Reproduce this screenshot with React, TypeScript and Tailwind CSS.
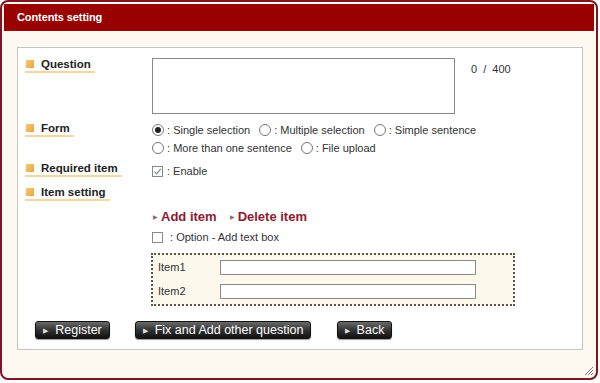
import React from "react";

const font = "font-['Liberation_Sans',Arial,sans-serif]";
const optCls = "text-[11px] leading-[14px] text-[#333]";

function Label({ text }: { text: string }) {
  return (
    <div className="flex w-fit items-center gap-[7px] border-b-2 border-[#f0d8a6] pl-[1px] pr-[4px]">
      <span className="h-[8px] w-[8px] bg-gradient-to-br from-[#f8c870] to-[#e9a540]" />
      <span className="text-[11.5px] font-bold leading-[14px] text-[#222]">{text}</span>
    </div>
  );
}

function Radio({ checked, label }: { checked?: boolean; label: string }) {
  return (
    <span className="flex items-center gap-[3px]">
      <span className="flex h-[12px] w-[12px] items-center justify-center rounded-full border border-[#777] bg-white">
        {checked && <span className="h-[6px] w-[6px] rounded-full bg-[#222]" />}
      </span>
      <span className={optCls}>: {label}</span>
    </span>
  );
}

function Check({ checked, label }: { checked?: boolean; label: string }) {
  return (
    <span className="flex items-center gap-[4px]">
      <span className="flex h-[11px] w-[11px] items-center justify-center border border-[#888] bg-white">
        {checked && (
          <svg width="9" height="9" viewBox="0 0 9 9">
            <path d="M1.5 4.5 L3.6 6.8 L7.8 1.8" fill="none" stroke="#7a8a7a" strokeWidth="1.1" />
          </svg>
        )}
      </span>
      <span className={optCls}>{label}</span>
    </span>
  );
}

function Btn({ text, w }: { text: string; w: string }) {
  return (
    <button
      className={`flex h-[18px] items-center justify-center gap-[7px] rounded-[3px] border border-[#111] bg-gradient-to-b from-[#6a6a6a] via-[#333] to-[#111] text-[12.5px] leading-none text-white shadow-[0_1px_1px_rgba(0,0,0,0.4)] ${w}`}
    >
      <span className="text-[7px] text-[#ddd]">▶</span>
      {text}
    </button>
  );
}

function LinkArrow({ text }: { text: string }) {
  return (
    <span className="flex items-center gap-[3px]">
      <span className="text-[6px] leading-[16px] text-[#8a6a6a]">▶</span>
      <span className="text-[13px] font-bold leading-[16px] text-[#8e1b2c]">{text}</span>
    </span>
  );
}

function ItemRow({ label }: { label: string }) {
  return (
    <div className="flex h-[15px] items-center">
      <span className="w-[62px] text-[11px] leading-[15px] text-[#333]">{label}</span>
      <span className="h-[15px] w-[256px] border border-[#8a8a8a] bg-white" />
    </div>
  );
}

export default function App() {
  return (
    <div className={`h-[383px] w-[600px] bg-white ${font}`}>
      <div className="relative flex h-[380px] w-[598px] flex-col rounded-[8px] border-2 border-[#7d1622] bg-[#fdf9f0] p-[2px]">
        <div className="flex h-[27px] items-center bg-[#990000] pl-[13px] text-[11px] font-bold tracking-[-0.1px] text-white">
          Contents setting
        </div>
        <div className="ml-[13px] mt-[16px] h-[303px] w-[566px] border border-[#c4c4c4] bg-white pl-[7px]">
          {/* Question */}
          <div className="mt-[9px] flex">
            <div className="w-[127px]">
              <Label text="Question" />
            </div>
            <div className="mt-[1px] h-[56px] w-[303px] border border-[#888] bg-white" />
            <div className="ml-[16px] mt-[4px] text-[11px] text-[#333] [word-spacing:3px]">0 / 400</div>
          </div>
          {/* Form */}
          <div className="mt-[7px] flex">
            <div className="w-[127px]">
              <Label text="Form" />
            </div>
            <div className="flex flex-col gap-[4px] pt-[2px]">
              <div className="flex items-center gap-[9px]">
                <Radio checked label="Single selection" />
                <Radio label="Multiple selection" />
                <Radio label="Simple sentence" />
              </div>
              <div className="flex items-center gap-[9px]">
                <Radio label="More than one sentence" />
                <Radio label="File upload" />
              </div>
            </div>
          </div>
          {/* Required item */}
          <div className="mt-[6px] flex">
            <div className="w-[127px]">
              <Label text="Required item" />
            </div>
            <div className="flex pt-[3px]">
              <Check checked label=": Enable" />
            </div>
          </div>
          {/* Item setting */}
          <div className="mt-[7px] flex">
            <div className="w-[127px]">
              <Label text="Item setting" />
            </div>
          </div>
          <div className="ml-[127px] mt-[8px] flex flex-col">
            <div className="flex items-center gap-[13px] pl-[1px]">
              <LinkArrow text="Add item" />
              <LinkArrow text="Delete item" />
            </div>
            <div className="mt-[5px] flex">
              <Check label={"\u00a0: Option - Add text box"} />
            </div>
            <div className="-ml-[1px] mt-[9px] flex w-[364px] flex-col gap-[9px] border-2 border-dotted border-[#5e5248] bg-[#fdf8ec] py-[5px] pl-[5px]">
              <ItemRow label="Item1" />
              <ItemRow label="Item2" />
            </div>
          </div>
          <div className="ml-[10px] mt-[15px] flex items-center">
            <Btn text="Register" w="w-[75px]" />
            <div className="ml-[25px]">
              <Btn text="Fix and Add other question" w="w-[176px]" />
            </div>
            <div className="ml-[26px]">
              <Btn text="Back" w="w-[55px]" />
            </div>
          </div>
        </div>
        <svg className="absolute bottom-[2px] right-[2px]" width="11" height="11" viewBox="0 0 11 11">
          <path d="M10 2 L2 10 M10 5 L5 10 M10 8 L8 10" stroke="#777" strokeWidth="1" />
        </svg>
      </div>
    </div>
  );
}
